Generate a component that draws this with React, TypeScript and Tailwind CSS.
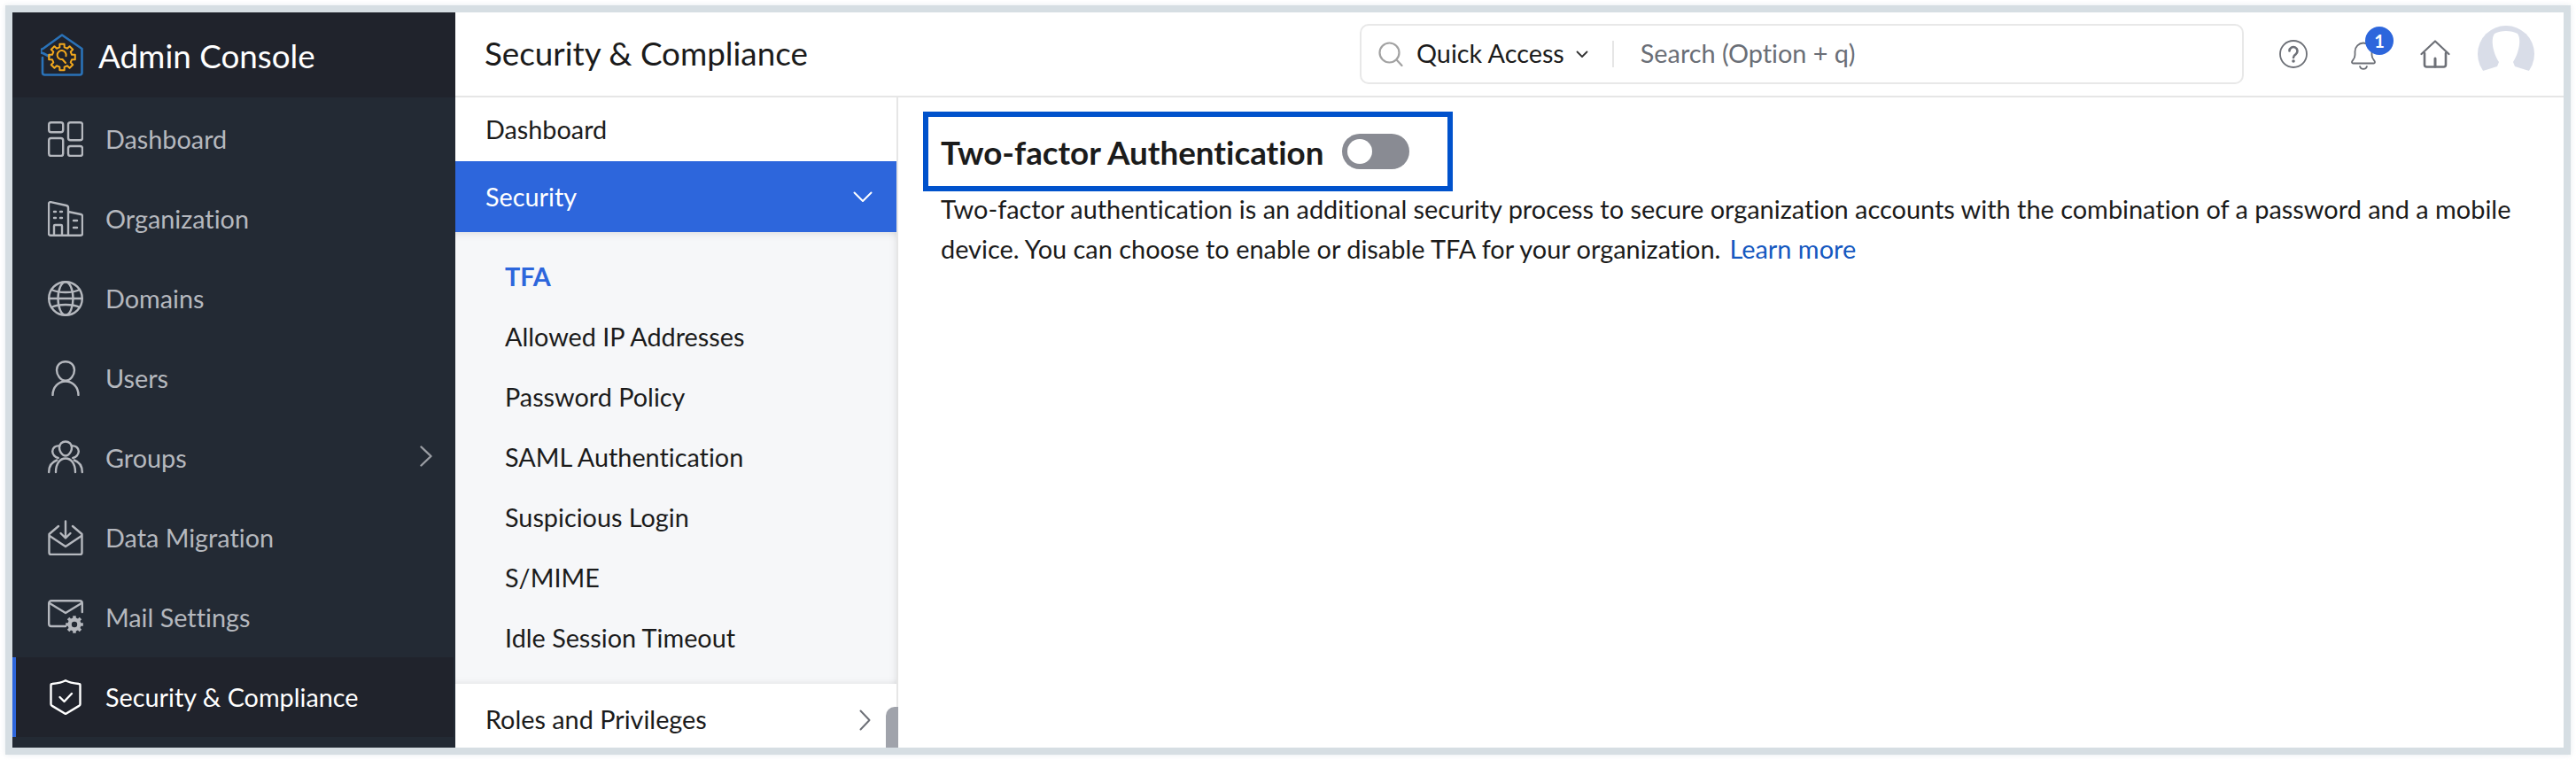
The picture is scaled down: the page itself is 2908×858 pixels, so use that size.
const gear = (cx: number, cy: number, r: number, n = 8) => {
  // rough cog outline, used for the logo and the mail settings icon
  const pts: string[] = []
  for (let i = 0; i < n; i++) {
    const a = (i / n) * Math.PI * 2
    const s = Math.PI / n
    const p = (rad: number, ang: number) => `${(cx + rad * Math.cos(ang)).toFixed(2)} ${(cy + rad * Math.sin(ang)).toFixed(2)}`
    pts.push(`${i === 0 ? 'M' : 'L'}${p(r, a - s * 0.45)}`, `L${p(r, a + s * 0.45)}`, `L${p(r * 0.76, a + s * 0.6)}`, `L${p(r * 0.76, a + s * 1.4)}`)
  }
  return pts.join(' ') + 'Z'
}

function Logo() {
  return (
    <svg width="48" height="48" viewBox="0 0 48 48" fill="none" strokeLinecap="round" strokeLinejoin="round">
      <path d="M2 27 V44 a2.5 2.5 0 0 0 2.5 2.5 H44 a2.5 2.5 0 0 0 2.5-2.5 V17 L24 1.5 L2.5 17 a2.5 2.5 0 0 0 0 5 L10 26" stroke="#2a72b8" strokeWidth="2.6" />
      <path d={gear(24, 26.5, 15)} stroke="#f2a81d" strokeWidth="2" />
      <path d="M28 33 L24.5 29 a5 5 0 1 1 4-3.8" stroke="#f2a81d" strokeWidth="2" />
    </svg>
  )
}

function Icon({ children }: { children: React.ReactNode }) {
  return (
    <svg width="40" height="40" viewBox="0 0 40 40" fill="none" stroke="currentColor" strokeWidth="2.4" strokeLinecap="round" strokeLinejoin="round" className="shrink-0">
      {children}
    </svg>
  )
}

const icons: Record<string, React.ReactNode> = {
  dashboard: (
    <>
      <rect x="1.2" y="1.2" width="16" height="11" rx="2.5" />
      <rect x="23" y="1.2" width="16" height="20" rx="2.5" />
      <rect x="1.2" y="19" width="16" height="20" rx="2.5" />
      <rect x="23" y="28" width="16" height="11" rx="2.5" />
    </>
  ),
  organization: (
    <>
      <path d="M23 38.8 H3 a2 2 0 0 1-2-2 V3 a2 2 0 0 1 2.4-1.8 L21 5 a2.5 2.5 0 0 1 2 2.4 V38.8 H37 a2 2 0 0 0 2-2 V17 a2 2 0 0 0-1.6-2 L23 12" />
      <path d="M7 12 h2 M14 12 h2 M7 19 h2 M14 19 h2 M29 22 h4 M29 30 h4" />
      <path d="M7 38 V28 a1 1 0 0 1 1-1 h7 a1 1 0 0 1 1 1 V38" />
    </>
  ),
  domains: (
    <>
      <circle cx="20" cy="20" r="18.8" />
      <ellipse cx="20" cy="20" rx="8.5" ry="18.8" />
      <path d="M1.2 20 H38.8 M4 10 C12 14 28 14 36 10 M4 30 C12 26 28 26 36 30" />
    </>
  ),
  users: (
    <>
      <path d="M20 1.2 c5.8 0 10 4.2 10 9.6 c0 5.4-4.2 12-10 12 s-10-6.6-10-12 c0-5.4 4.2-9.6 10-9.6 Z" />
      <path d="M5.5 39 C5.5 30 12 23.5 20 23.5 S34.5 30 34.5 39" />
    </>
  ),
  groups: (
    <>
      <path d="M20 1.5 c4 0 7 3 7 6.8 c0 3.8-3 9.2-7 9.2 s-7-5.4-7-9.2 c0-3.8 3-6.8 7-6.8 Z" />
      <path d="M13.2 6.5 c-4.5-.8-8 2-8 6 c0 3.5 3 7 6.5 7.5 M26.8 6.5 c4.5-.8 8 2 8 6 c0 3.5-3 7-6.5 7.5" />
      <path d="M9 36 C9 26 14 20.5 20 20.5 S31 26 31 36" />
      <path d="M1.2 36 c0-7 3.5-11.5 9-13.5 M38.8 36 c0-7-3.5-11.5-9-13.5" />
    </>
  ),
  migration: (
    <>
      <path d="M20 1.5 V19 M14.5 15 L20 20.5 L25.5 15" />
      <path d="M12 7 L1.5 16 V37 a2 2 0 0 0 2 2 H36.5 a2 2 0 0 0 2-2 V16 L28 7" />
      <path d="M2 18 L20 30 L38 18" />
    </>
  ),
  mail: (
    <>
      <path d="M20 30 H4 a2.8 2.8 0 0 1-2.8-2.8 V4 a2.8 2.8 0 0 1 2.8-2.8 H36 a2.8 2.8 0 0 1 2.8 2.8 V14" />
      <path d="M2 4 L20 15 L38 4" />
      <path d={gear(30, 28, 10)} fill="currentColor" stroke="none" />
      <circle cx="30" cy="28" r="3.2" fill="#232a34" stroke="none" />
    </>
  ),
  security: (
    <>
      <path d="M20 1.2 C25 4 30 4.5 35 5 a1.5 1.5 0 0 1 1.5 1.5 V28 a2 2 0 0 1-.9 1.6 L20 39 L4.4 29.6 a2 2 0 0 1-.9-1.6 V6.5 A1.5 1.5 0 0 1 5 5 C10 4.5 15 4 20 1.2 Z" />
      <path d="M13.5 20 L18.5 25 L27 16" />
    </>
  ),
}

const mainNav = [
  { label: 'Dashboard', icon: 'dashboard' },
  { label: 'Organization', icon: 'organization' },
  { label: 'Domains', icon: 'domains' },
  { label: 'Users', icon: 'users' },
  { label: 'Groups', icon: 'groups', arrow: true },
  { label: 'Data Migration', icon: 'migration' },
  { label: 'Mail Settings', icon: 'mail' },
]

const subNav = ['Allowed IP Addresses', 'Password Policy', 'SAML Authentication', 'Suspicious Login', 'S/MIME', 'Idle Session Timeout']

function Sidebar() {
  return (
    <aside className="w-[500px] shrink-0 bg-[#232a34] flex flex-col">
      <div className="h-[96px] bg-[#20232c] flex items-center pl-[32px] gap-[17px]">
        <Logo />
        <span className="text-[36.8px] text-white pt-[3px]">Admin Console</span>
      </div>
      <nav className="pt-[2px]">
        {mainNav.map((item) => (
          <div key={item.label} className="h-[90px] flex items-center pl-[40px] gap-[25px] text-[#b5b8be] relative">
            <Icon>{icons[item.icon]}</Icon>
            <span className="text-[28.8px] pt-[2px]">{item.label}</span>
            {item.arrow && (
              <svg width="16" height="24" viewBox="0 0 16 24" fill="none" stroke="#9a9da3" strokeWidth="2.4" strokeLinecap="round" strokeLinejoin="round" className="absolute right-[25px] top-[31px]">
                <path d="M2.5 1.5 L13.5 12 L2.5 22.5" />
              </svg>
            )}
          </div>
        ))}
        <div className="h-[90px] w-[498px] flex items-center pl-[36px] gap-[25px] text-white bg-[#20232c] border-l-4 border-[#2d66dc]">
          <Icon>{icons.security}</Icon>
          <span className="text-[28.8px] pt-[2px]">Security &amp; Compliance</span>
        </div>
      </nav>
    </aside>
  )
}

function TopBar() {
  return (
    <header className="h-[96px] shrink-0 border-b-2 border-[#e6e6e6] flex items-center pl-[33px] pr-[23px] bg-white">
      <h1 className="text-[36.8px] text-[#1b1b1b] w-[988px] shrink-0">Security &amp; Compliance</h1>
      <div className="w-[998px] h-[68px] shrink-0 border-2 border-[#e8e8e8] rounded-[10px] flex items-center pl-[19px]">
        <svg width="28" height="28" viewBox="0 0 28 28" fill="none" stroke="#a2a2a2" strokeWidth="2.2" strokeLinecap="round" className="shrink-0">
          <circle cx="12.5" cy="12.5" r="11" />
          <path d="M20.5 20.5 L26.5 27" />
        </svg>
        <span className="text-[28.8px] text-[#1b1b1b] ml-[15px]">Quick Access</span>
        <svg width="14" height="9" viewBox="0 0 14 9" fill="none" stroke="#333" strokeWidth="1.8" strokeLinecap="round" strokeLinejoin="round" className="ml-[13px]">
          <path d="M1.5 1.5 L7 7 L12.5 1.5" />
        </svg>
        <span className="w-[2px] h-[30px] bg-[#e6e6e6] ml-[27px]" />
        <span className="text-[28.8px] text-[#6a6e76] ml-[30px]">Search (Option + q)</span>
      </div>
      <div className="flex items-center ml-[40px]">
        <svg width="32" height="32" viewBox="0 0 32 32" fill="none" className="shrink-0">
          <circle cx="16" cy="16" r="15" stroke="#6d7077" strokeWidth="1.8" />
          <path d="M11.5 12.5 a4.5 4.5 0 1 1 7 3.8 c-1.6 1-2.5 1.8-2.5 3.7" stroke="#6d7077" strokeWidth="2.6" strokeLinecap="round" />
          <circle cx="16" cy="24" r="1.8" fill="#6d7077" />
        </svg>
        <div className="relative w-[32px] h-[36px] ml-[48px] mt-[6px]">
          <svg width="30" height="34" viewBox="0 0 30 34" fill="none" stroke="#6d7077" strokeWidth="1.8" strokeLinecap="round" strokeLinejoin="round">
            <path d="M2 24 c0-2 3.5-3 3.5-8 V12 a9.5 9.5 0 0 1 19 0 v4 c0 5 3.5 6 3.5 8 a1.5 1.5 0 0 1-1.5 1.5 H3.5 A1.5 1.5 0 0 1 2 24 Z" />
            <path d="M11 29 a4.2 4.2 0 0 0 8 0" />
          </svg>
          <span className="absolute -top-[16px] left-[17px] w-[32px] h-[32px] rounded-full bg-[#2d66dc] text-white text-[20px] font-bold flex items-center justify-center">1</span>
        </div>
        <svg width="34" height="32" viewBox="0 0 34 32" fill="none" stroke="#6d7077" strokeWidth="2.2" strokeLinecap="round" strokeLinejoin="round" className="ml-[47px] shrink-0">
          <path d="M1.5 16 L17 1.5 L32.5 16" />
          <path d="M5 15 V28 a2.5 2.5 0 0 0 2.5 2.5 H26.5 a2.5 2.5 0 0 0 2.5-2.5 V15" strokeWidth="2.6" />
          <path d="M17 21 V30" strokeWidth="3" />
        </svg>
        <svg width="64" height="64" viewBox="0 0 64 64" className="ml-[31px] shrink-0">
          <circle cx="32" cy="32" r="32" fill="#d9dde8" />
          <path d="M6 51 L22 46 L24 41 C18 32 14 16 19 9 C26 5 38 5 45 9 C50 16 46 32 40 41 L42 46 L58 51 L56 64 L8 64 Z" fill="#ffffff" />
        </svg>
      </div>
    </header>
  )
}

function SubPanel() {
  return (
    <div className="w-[500px] shrink-0 border-r-2 border-[#e6e6e6] flex flex-col relative">
      <div className="h-[72px] shrink-0 flex items-center pl-[34px] pt-[2px] text-[28.8px] text-[#1b1b1b]">Dashboard</div>
      <div className="h-[80px] shrink-0 bg-[#2d66dc] flex items-center justify-between pl-[34px] pr-[27px] text-[28.8px] text-white">
        <span className="pt-[2px]">Security</span>
        <svg width="22" height="13" viewBox="0 0 22 13" fill="none" stroke="#ffffff" strokeWidth="2" strokeLinecap="round" strokeLinejoin="round">
          <path d="M1.5 1.5 L11 11 L20.5 1.5" />
        </svg>
      </div>
      <div className="h-[510px] shrink-0 bg-[#f6f7f9] pt-[17px] pl-[56px] text-[28.8px] text-[#1b1b1b] shadow-[inset_0_10px_10px_-8px_rgba(0,0,0,0.1),inset_-8px_0_8px_-8px_rgba(0,0,0,0.1),inset_0_-8px_8px_-8px_rgba(0,0,0,0.1)]">
        <div className="h-[68px] flex items-center font-bold text-[#2d66dc]">TFA</div>
        {subNav.map((label) => (
          <div key={label} className="h-[68px] flex items-center">{label}</div>
        ))}
      </div>
      <div className="h-[72px] shrink-0 flex items-center justify-between pl-[34px] pr-[29px] pt-[10px] text-[28.8px] text-[#1b1b1b]">
        Roles and Privileges
        <svg width="13" height="24" viewBox="0 0 13 24" fill="none" stroke="#6d7077" strokeWidth="2" strokeLinecap="round" strokeLinejoin="round">
          <path d="M1.5 1.5 L11.5 12 L1.5 22.5" />
        </svg>
      </div>
      <div className="absolute -right-[2px] top-[688px] w-[14px] h-[46px] bg-[#a0a3ab] rounded-tl-[10px]" />
    </div>
  )
}

function Content() {
  return (
    <section className="flex-1 pl-[28px] pt-[16px] pr-[40px]">
      <div className="w-[598px] h-[90px] border-[6px] border-[#0052cc] flex items-center pl-[14px]">
        <h2 className="text-[36.8px] font-bold text-[#1b1b1b] pt-[4px]">Two-factor Authentication</h2>
        <span className="ml-[21px] w-[76px] h-[40px] rounded-full bg-[#898b93] flex items-center pl-[6px]">
          <span className="w-[28px] h-[28px] rounded-full bg-white" />
        </span>
      </div>
      <p className="-mt-[3px] pl-[20px] text-[28.9px] leading-[45px] text-[#1b1b1b]">
        Two-factor authentication is an additional security process to secure organization accounts with the combination of a password and a mobile device. You can choose to enable or disable TFA for your organization.
        <a className="ml-[10px] text-[#1558c0]">Learn more</a>
      </p>
    </section>
  )
}

export default function App() {
  return (
    <div className="w-[2908px] h-[858px] bg-white p-[6px] font-['Lato',sans-serif] [font-variant-ligatures:none] overflow-hidden">
      <div className="w-[2896px] h-[846px] border-8 border-[#d6dee3] flex bg-white shadow-[0_0_6px_rgba(214,222,227,0.6)]">
        <Sidebar />
        <main className="flex-1 flex flex-col min-w-0">
          <TopBar />
          <div className="flex-1 flex min-h-0">
            <SubPanel />
            <Content />
          </div>
        </main>
      </div>
    </div>
  )
}
